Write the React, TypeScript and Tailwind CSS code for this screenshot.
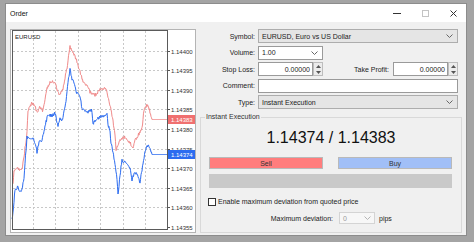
import React from "react";

// Ask (red) and bid (blue) key points in page coordinates
const ASK: [number, number][] = [
  [13, 185], [14, 172], [17, 168], [20, 171], [22, 168], [24, 158], [25, 148], [27, 133],
  [28, 110], [30, 106], [32, 103], [35, 106], [37, 113], [40, 107], [43, 111], [45, 100],
  [47, 88], [50, 82], [55, 82], [57, 90], [60, 95], [63, 88], [65, 78], [67, 68], [69, 52],
  [70, 47], [73, 52], [75, 56], [77, 62], [80, 72], [83, 82], [87, 85], [90, 92], [95, 95],
  [100, 90], [105, 88], [107, 92], [108, 98], [110, 106], [112, 115], [114, 128], [115, 135],
  [116, 150], [118, 145], [120, 140], [125, 137], [130, 143], [133, 147], [135, 140],
  [137, 137], [140, 132], [142, 128], [144, 110], [145, 107], [148, 105], [150, 112],
  [152, 119.5], [167, 119.5],
];

const BID: [number, number][] = [
  [12, 220], [13, 212], [15, 190], [18, 186], [20, 192], [22, 190], [24, 178], [25, 163],
  [27, 137], [30, 140], [33, 138], [35, 143], [37, 152], [39, 142], [42, 140], [44, 132],
  [46, 122], [48, 115], [52, 116], [55, 113], [57, 122], [58, 126], [60, 118], [62, 121],
  [65, 108], [67, 92], [69, 75], [70, 68], [72, 80], [74, 82], [76, 92], [78, 95], [80, 97],
  [82, 108], [85, 110], [87, 113], [90, 109], [92, 111], [93, 124], [96, 120], [100, 117],
  [104, 116], [107, 114], [108, 124], [110, 132], [111, 143], [113, 152], [115, 163],
  [117, 180], [118, 195], [120, 175], [122, 160], [125, 162], [127, 163], [130, 168],
  [132, 180], [135, 172], [138, 176], [140, 182], [142, 170], [143, 163], [145, 152],
  [147, 145], [150, 148], [152, 154.5], [167, 154.5],
];

function jagged(pts: [number, number][], seed: number) {
  const out: string[] = [];
  for (let i = 0; i < pts.length - 1; i++) {
    const [x0, y0] = pts[i];
    const [x1, y1] = pts[i + 1];
    for (let x = x0; x < x1; x += 0.5) {
      let y = y0 + ((y1 - y0) * (x - x0)) / (x1 - x0);
      if (x < 152) {
        const h = Math.sin(x * 12.9898 + seed * 78.233) * 43758.5453;
        y += (h - Math.floor(h) - 0.5) * 3.2;
      }
      out.push(`${x},${y.toFixed(1)}`);
    }
  }
  const last = pts[pts.length - 1];
  out.push(`${last[0]},${last[1]}`);
  return out.join(" ");
}

const LEVELS = ["1.14400", "1.14395", "1.14390", "1.14385", "1.14380", "1.14375", "1.14370", "1.14365", "1.14360", "1.14355"];
const VGRID = [33, 55, 78, 100, 123, 145];

function Chart() {
  return (
    <div className="w-[186px] h-[204px] bg-white border border-[#b4b4b4]">
      <svg width="184" height="202" viewBox="11 30 184 202" className="block">
        {VGRID.map((x) => (
          <line key={x} x1={x + 0.5} y1={31} x2={x + 0.5} y2={229} stroke="#c8c8c8" strokeDasharray="2 2" />
        ))}
        {LEVELS.map((l, i) => {
          const y = Math.round(50.5 + i * 19.6) + 0.5;
          return (
            <g key={l}>
              {i < 9 && <line x1={13} y1={y} x2={167} y2={y} stroke="#c8c8c8" strokeDasharray="2 2" />}
              <line x1={167} y1={y} x2={170} y2={y} stroke="#555" />
              <text x={171} y={y} fontSize="6" fill="#333" dominantBaseline="central" fontFamily="Liberation Sans, Arial, sans-serif">
                {l}
              </text>
            </g>
          );
        })}
        <polyline points={jagged(ASK, 3)} fill="none" stroke="#f08a8a" strokeWidth="1" />
        <polyline points={jagged(BID, 7)} fill="none" stroke="#2c6cf0" strokeWidth="1" />
        <rect x={12.5} y={30.5} width={155} height={199} fill="none" stroke="#5a5a5a" />
        <rect x={168} y={115} width={27} height={9} fill="#f07070" />
        <text x={171} y={119.5} fontSize="6" fill="#fff" dominantBaseline="central" fontFamily="Liberation Sans, Arial, sans-serif">
          1.14383
        </text>
        <rect x={168} y={150} width={27} height={9} fill="#2c6cf0" />
        <text x={171} y={154.5} fontSize="6" fill="#fff" dominantBaseline="central" fontFamily="Liberation Sans, Arial, sans-serif">
          1.14374
        </text>
        <text x={15} y={37} fontSize="6" fill="#222" dominantBaseline="central" fontFamily="Liberation Sans, Arial, sans-serif">
          EURUSD
        </text>
      </svg>
    </div>
  );
}

function Chevron({ color = "#666" }: { color?: string }) {
  return (
    <svg width="7" height="4" viewBox="0 0 7 4" className="block">
      <polyline points="0.5,0.5 3.5,3.5 6.5,0.5" fill="none" stroke={color} />
    </svg>
  );
}

function Spinner() {
  return (
    <div className="w-[10px] h-full flex flex-col border border-[#bdbdbd] bg-[#ececec]">
      <div className="flex-1 flex items-center justify-center">
        <svg width="5" height="3" viewBox="0 0 5 3" className="block">
          <polygon points="0,3 2.5,0 5,3" fill="#555" />
        </svg>
      </div>
      <div className="flex-1 flex items-center justify-center">
        <svg width="5" height="3" viewBox="0 0 5 3" className="block">
          <polygon points="0,0 2.5,3 5,0" fill="#555" />
        </svg>
      </div>
    </div>
  );
}

function Select({ value, white }: { value: string; white?: boolean }) {
  return (
    <div
      className={`h-full flex items-center justify-between pl-[3px] pr-[4px] border ${
        white ? "bg-white border-[#9a9a9a]" : "bg-[#e5e5e5] border-[#adadad]"
      }`}
    >
      <span>{value}</span>
      <Chevron />
    </div>
  );
}

function NumberBox() {
  return (
    <div className="h-full flex">
      <div className="w-[55px] h-full bg-white border border-[#9a9a9a] flex items-center justify-end pr-[2px]">0.00000</div>
      <Spinner />
    </div>
  );
}

function Form() {
  return (
    <div className="grid grid-cols-[55px_1fr] grid-rows-[14px_14px_14px_14px_14px] gap-x-[3px] gap-y-[2.5px] pr-[4px]">
      <div className="text-right self-center">Symbol:</div>
      <Select value="EURUSD, Euro vs US Dollar" />
      <div className="text-right self-center">Volume:</div>
      <div className="w-[65px] h-full">
        <Select value="1.00" white />
      </div>
      <div className="text-right self-center">Stop Loss:</div>
      <div className="flex items-center h-full">
        <NumberBox />
        <div className="flex-1 text-right pr-[4px]">Take Profit:</div>
        <NumberBox />
      </div>
      <div className="text-right self-center">Comment:</div>
      <div className="h-full bg-white border border-[#9a9a9a]" />
      <div className="text-right self-center">Type:</div>
      <Select value="Instant Execution" />
    </div>
  );
}

function Execution() {
  return (
    <fieldset className="flex-1 mt-[3px] border border-[#d9d9d9]">
      <legend className="ml-[4px] px-[1px] leading-[10px] text-[#333]">Instant Execution</legend>
      <div className="mt-[5px] h-[22px] flex items-center justify-center text-[16px] text-[#111]">1.14374 / 1.14383</div>
      <div className="mt-[8px] flex pl-[8px] pr-[9px] gap-[15px]">
        <div className="flex-1 h-[12px] bg-[#ff7d7d] border border-[#b9b9b9] flex items-center justify-center text-[#333]">Sell</div>
        <div className="flex-1 h-[12px] bg-[#a1bff7] border border-[#b9b9b9] flex items-center justify-center text-[#333]">Buy</div>
      </div>
      <div className="mt-[5px] ml-[8px] mr-[9px] h-[14px] bg-[#c9c9c9]" />
      <div className="mt-[9px] h-[9px] flex items-center pl-[7px]">
        <div className="w-[8px] h-[8px] bg-white border border-[#333]" />
        <span className="ml-[2px]">Enable maximum deviation from quoted price</span>
      </div>
      <div className="mt-[6px] h-[12px] flex items-center">
        <div className="w-[132px] text-right">Maximum deviation:</div>
        <div className="ml-[6px] w-[36px] h-full bg-[#f7f7f7] border border-[#d4d4d4] flex items-center justify-between pl-[3px] pr-[3px] text-[#9a9a9a]">
          <span>0</span>
          <Chevron color="#b5b5b5" />
        </div>
        <span className="ml-[4px]">pips</span>
      </div>
    </fieldset>
  );
}

export default function App() {
  return (
    <div className="w-[474px] h-[242px] bg-[#a4a4a4] pt-[3px] pl-[5px] font-['Liberation_Sans',Arial,sans-serif] text-[7px] text-[#222] leading-none">
      <div className="w-[462px] h-[233px] bg-[#f0f0f0] border border-[#8c8c8c] flex flex-col">
        <div className="h-[18px] bg-white flex items-center shrink-0">
          <span className="ml-[4px] text-[#111]">Order</span>
          <div className="ml-auto flex items-center">
            <svg width="8" height="7" viewBox="0 0 8 7" className="block">
              <line x1="0" y1="3.5" x2="8" y2="3.5" stroke="#333" />
            </svg>
            <svg width="7" height="7" viewBox="0 0 7 7" className="block ml-[21px]">
              <rect x="0.5" y="0.5" width="6" height="6" fill="none" stroke="#c4c4c4" />
            </svg>
            <svg width="7" height="7" viewBox="0 0 7 7" className="block ml-[21px] mr-[9px]">
              <line x1="0.5" y1="0.5" x2="6.5" y2="6.5" stroke="#333" />
              <line x1="6.5" y1="0.5" x2="0.5" y2="6.5" stroke="#333" />
            </svg>
          </div>
        </div>
        <div className="flex-1 flex pt-[7px] pb-[2px] pl-[4px] pr-[4px] gap-[4px]">
          <Chart />
          <div className="w-[262px] flex flex-col">
            <Form />
            <Execution />
          </div>
        </div>
      </div>
    </div>
  );
}
